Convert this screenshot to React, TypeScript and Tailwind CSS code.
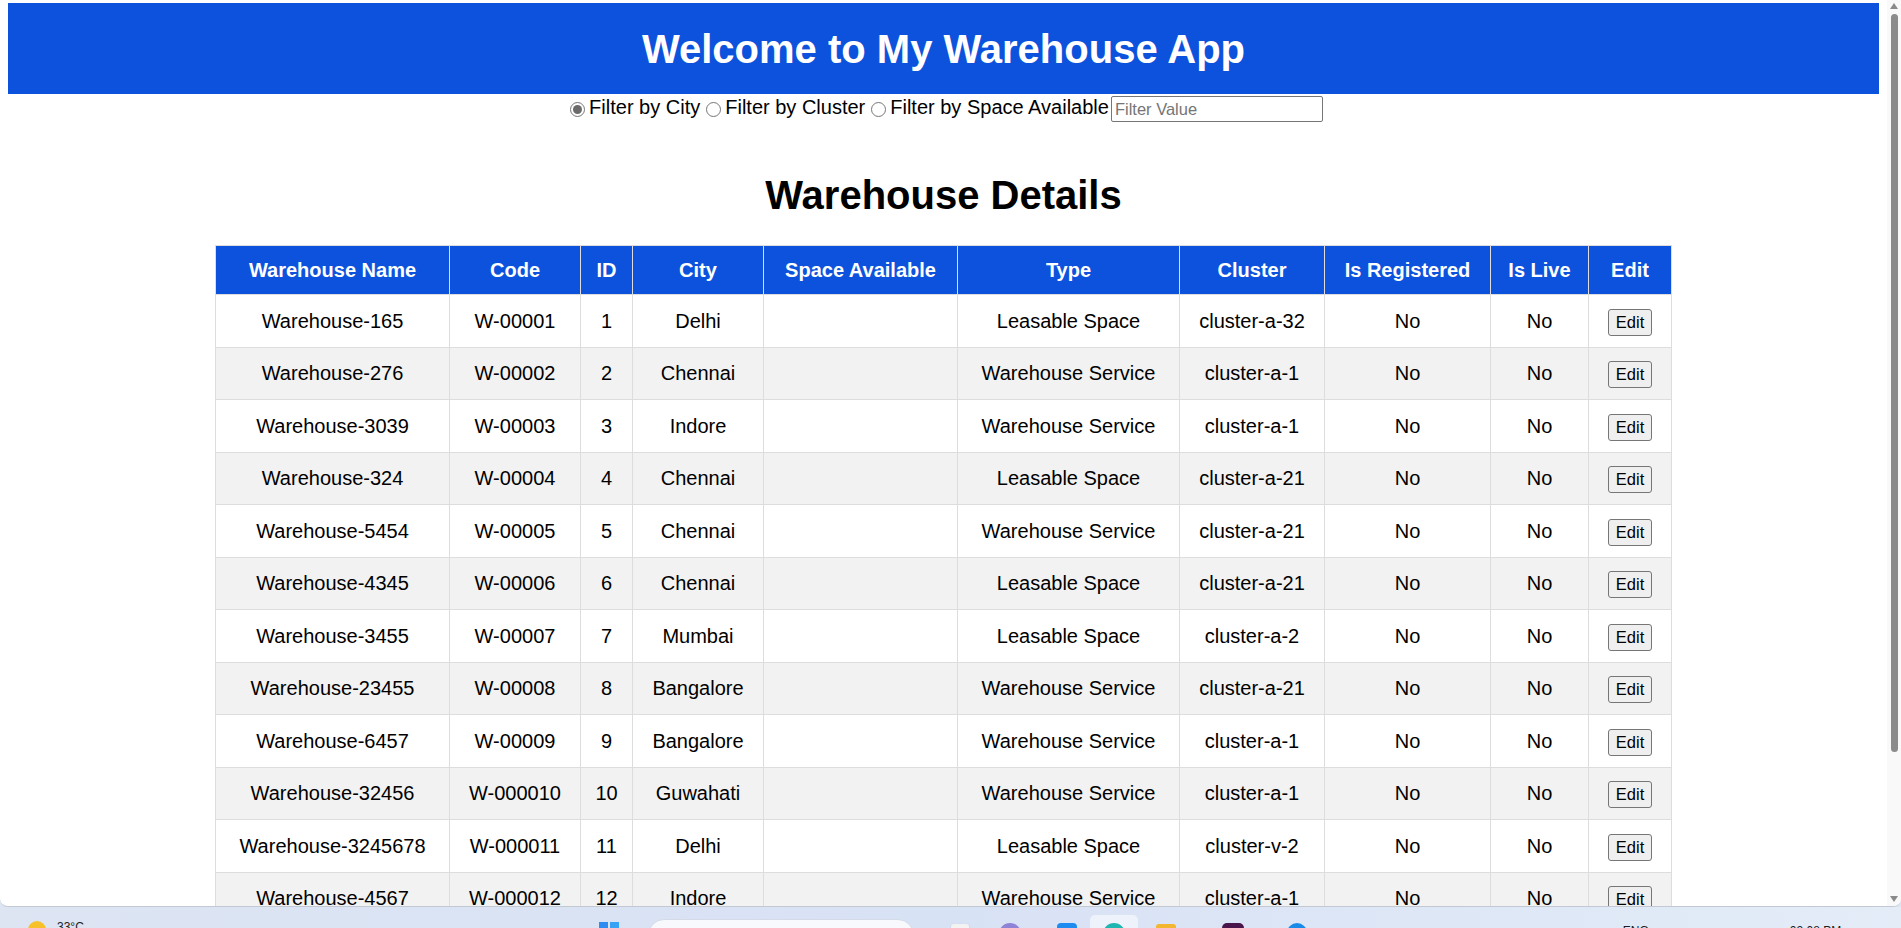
import React from "react";

type Warehouse = {
  name: string;
  code: string;
  id: number;
  city: string;
  type: string;
  cluster: string;
};

const warehouses: Warehouse[] = [
  { name: "Warehouse-165", code: "W-00001", id: 1, city: "Delhi", type: "Leasable Space", cluster: "cluster-a-32" },
  { name: "Warehouse-276", code: "W-00002", id: 2, city: "Chennai", type: "Warehouse Service", cluster: "cluster-a-1" },
  { name: "Warehouse-3039", code: "W-00003", id: 3, city: "Indore", type: "Warehouse Service", cluster: "cluster-a-1" },
  { name: "Warehouse-324", code: "W-00004", id: 4, city: "Chennai", type: "Leasable Space", cluster: "cluster-a-21" },
  { name: "Warehouse-5454", code: "W-00005", id: 5, city: "Chennai", type: "Warehouse Service", cluster: "cluster-a-21" },
  { name: "Warehouse-4345", code: "W-00006", id: 6, city: "Chennai", type: "Leasable Space", cluster: "cluster-a-21" },
  { name: "Warehouse-3455", code: "W-00007", id: 7, city: "Mumbai", type: "Leasable Space", cluster: "cluster-a-2" },
  { name: "Warehouse-23455", code: "W-00008", id: 8, city: "Bangalore", type: "Warehouse Service", cluster: "cluster-a-21" },
  { name: "Warehouse-6457", code: "W-00009", id: 9, city: "Bangalore", type: "Warehouse Service", cluster: "cluster-a-1" },
  { name: "Warehouse-32456", code: "W-000010", id: 10, city: "Guwahati", type: "Warehouse Service", cluster: "cluster-a-1" },
  { name: "Warehouse-3245678", code: "W-000011", id: 11, city: "Delhi", type: "Leasable Space", cluster: "cluster-v-2" },
  { name: "Warehouse-4567", code: "W-000012", id: 12, city: "Indore", type: "Warehouse Service", cluster: "cluster-a-1" },
];

const headers = [
  "Warehouse Name",
  "Code",
  "ID",
  "City",
  "Space Available",
  "Type",
  "Cluster",
  "Is Registered",
  "Is Live",
  "Edit",
];

const Radio = ({ checked }: { checked?: boolean }) => (
  <span className="ml-[6px] mr-[4px] flex h-[15px] w-[15px] shrink-0 items-center justify-center rounded-full border border-[#767676] bg-white">
    {checked && <span className="h-[9px] w-[9px] rounded-full bg-[#6b6b6b]" />}
  </span>
);

const Taskbar = () => (
  <div className="flex h-[48px] shrink-0 items-start bg-gradient-to-r from-[#dde5f3] via-[#d8e2f5] to-[#e3ecf7] text-[12px] text-[#1b1b1b]">
    <span className="ml-[28px] mt-[14px] h-[18px] w-[18px] rounded-full bg-[#f6c12b]" />
    <span className="ml-[11px] mt-[11px]">33°C</span>
    <div className="ml-[515px] mt-[15px] grid grid-cols-2 gap-[2px]">
      <span className="h-[9px] w-[9px] bg-[#2f8cf0]" />
      <span className="h-[9px] w-[9px] bg-[#38a3f5]" />
      <span className="h-[9px] w-[9px] bg-[#2a7fe6]" />
      <span className="h-[9px] w-[9px] bg-[#3397ef]" />
    </div>
    <div className="ml-[29px] mt-[12px] h-[32px] w-[266px] rounded-full border border-[#d4dbe6] bg-[#f7f9fc]" />
    <span className="ml-[37px] mt-[17px] h-[20px] w-[18px] rounded-[3px] bg-[#f3f3f3] shadow-sm" />
    <span className="ml-[30px] mt-[16px] h-[22px] w-[22px] rounded-full bg-[#8f83d6]" />
    <span className="ml-[36px] mt-[16px] h-[20px] w-[20px] rounded-[4px] bg-[#1d8bf0]" />
    <div className="ml-[13px] mt-[8px] flex h-[40px] w-[48px] justify-center rounded-[5px] bg-[#eef3fb]">
      <span className="mt-[8px] h-[22px] w-[22px] rounded-full bg-[#1fb5b0]" />
    </div>
    <span className="ml-[18px] mt-[17px] h-[20px] w-[20px] rounded-[3px] bg-[#f2b630]" />
    <span className="ml-[46px] mt-[16px] h-[22px] w-[22px] rounded-[5px] bg-[#4a154b]" />
    <span className="ml-[43px] mt-[16px] h-[20px] w-[20px] rounded-full bg-[#1a8ae8]" />
    <span className="ml-[316px] mt-[15px]">ENG</span>
    <span className="ml-[141px] mt-[15px]">02:08 PM</span>
  </div>
);

export default function App() {
  return (
    <div className="flex h-[928px] w-[1901px] flex-col overflow-hidden bg-[#dde5f3] font-['Liberation_Sans',Arial,sans-serif] text-black">
      <div className="flex h-[907px] shrink-0 overflow-hidden rounded-b-[8px] border-b border-[#c3c9d3] bg-white">
        <div className="min-w-0 flex-1 px-[8px] pt-[3px]">
          <header className="flex h-[91px] items-center justify-center bg-[#0d52dd]">
            <h1 className="text-[40px] font-bold leading-none text-white">
              Welcome to My Warehouse App
            </h1>
          </header>

          <div className="mt-[2px] flex h-[26px] items-center justify-center text-[20px] leading-none">
            <Radio checked />
            <span className="mb-[5px]">Filter by City</span>
            <Radio />
            <span className="mb-[5px]">Filter by Cluster</span>
            <Radio />
            <span className="mb-[5px]">Filter by Space Available</span>
            <div className="ml-[2px] flex h-[26px] w-[212px] items-center rounded-[2px] border border-[#767676] px-[3px] text-[16.5px] text-[#757575]">
              Filter Value
            </div>
          </div>

          <h2 className="mt-[50px] text-center text-[40px] font-bold leading-[46px]">
            Warehouse Details
          </h2>

          <table className="mx-auto mt-[27px] w-[1456px] table-fixed border-collapse text-center text-[20px]">
            <colgroup>
              <col className="w-[234px]" />
              <col className="w-[131px]" />
              <col className="w-[52px]" />
              <col className="w-[131px]" />
              <col className="w-[194px]" />
              <col className="w-[222px]" />
              <col className="w-[145px]" />
              <col className="w-[166px]" />
              <col className="w-[98px]" />
              <col className="w-[83px]" />
            </colgroup>
            <thead>
              <tr className="h-[49px] bg-[#0d52dd] text-white">
                {headers.map((h) => (
                  <th key={h} className="border border-[#dddddd] font-bold">
                    {h}
                  </th>
                ))}
              </tr>
            </thead>
            <tbody>
              {warehouses.map((w) => (
                <tr key={w.id} className="h-[52.5px] even:bg-[#f2f2f2]">
                  <td className="border border-[#dddddd]">{w.name}</td>
                  <td className="border border-[#dddddd]">{w.code}</td>
                  <td className="border border-[#dddddd]">{w.id}</td>
                  <td className="border border-[#dddddd]">{w.city}</td>
                  <td className="border border-[#dddddd]"></td>
                  <td className="border border-[#dddddd]">{w.type}</td>
                  <td className="border border-[#dddddd]">{w.cluster}</td>
                  <td className="border border-[#dddddd]">No</td>
                  <td className="border border-[#dddddd]">No</td>
                  <td className="border border-[#dddddd]">
                    <button className="h-[27px] rounded-[3px] border border-[#767676] bg-[#efefef] px-[7px] text-[16.5px] leading-none">
                      Edit
                    </button>
                  </td>
                </tr>
              ))}
            </tbody>
          </table>
        </div>

        <div className="flex w-[14px] shrink-0 flex-col items-center bg-[#f9f9f9]">
          <svg width="8" height="6" viewBox="0 0 8 6" className="mt-[3px]">
            <path d="M4 0 L8 6 L0 6 Z" fill="#8a8a8a" />
          </svg>
          <div className="mt-[5px] h-[738px] w-[7px] rounded-full bg-[#8b8b8b]" />
          <div className="flex-1" />
          <svg width="8" height="6" viewBox="0 0 8 6" className="mb-[4px]">
            <path d="M0 0 L8 0 L4 6 Z" fill="#8a8a8a" />
          </svg>
        </div>
      </div>
      <Taskbar />
    </div>
  );
}
